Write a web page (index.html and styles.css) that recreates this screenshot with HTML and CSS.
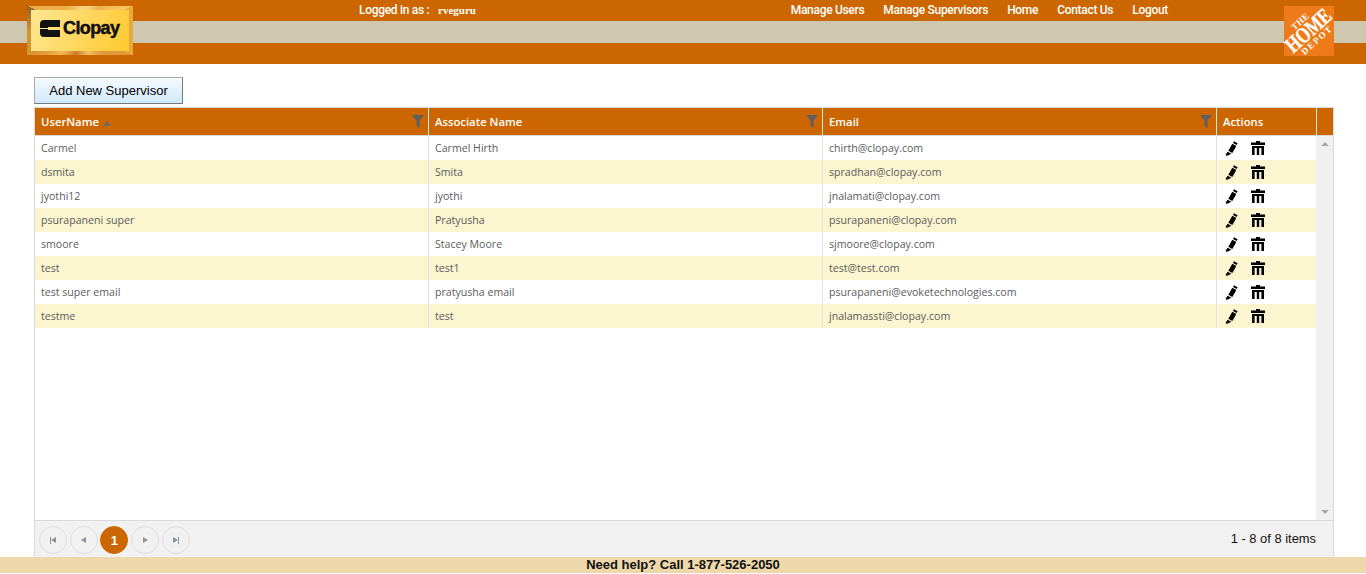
FILE: index.html
```html
<!DOCTYPE html>
<html lang="en">
<head>
  <meta charset="UTF-8" />
  <title>Manage Supervisors</title>
  <link rel="stylesheet" href="styles.css">
</head>
<body>
  <svg class="defs" width="0" height="0">
    <symbol id="i-filter" viewBox="0 0 12 13">
      <path d="M0 0h12L7.5 5.5V13L4.5 10.5V5.5z" />
    </symbol>
    <symbol id="i-pencil" viewBox="0 0 13 15">
      <path d="M9 0.2l3.6 2-1 1.8-3.6-2zM7.3 2.8l4 2.3-4 7-4-2.3zM2.7 10.7l3.7 2.1-3.6 1.7-2.1.3.4-1.7z" />
    </symbol>
    <symbol id="i-trash" viewBox="0 0 14 14">
      <path d="M5 0h4v1.5h5V4H0V1.5h5zM1 5h12v9h-2.6V7H8.2v7H5.8V7H3.6v7H1z" />
    </symbol>
    <symbol id="i-mark" viewBox="0 0 20 17">
      <path d="M4 0h16v7H8v1H0V4a4 4 0 0 1 4-4zM0 9h8v1h12v7H4a4 4 0 0 1-4-4z" />
    </symbol>
  </svg>

  <div class="header">
    <div class="logo-clopay">
      <svg class="clopay-mark"><use href="#i-mark" /></svg>
      <span class="clopay-name">Clopay</span>
    </div>
    <div class="logo-depot">
      <div class="depot-text">
        <span class="depot-small">THE</span>
        <span class="depot-big">HOME</span>
        <span class="depot-small depot-low">DEPOT</span>
      </div>
    </div>
    <div class="header-top">
      <div class="logged-in">Logged in as : <b>rveguru</b></div>
      <div class="nav">
        <a href="#">Manage Users</a>
        <a href="#">Manage Supervisors</a>
        <a href="#">Home</a>
        <a href="#">Contact Us</a>
        <a href="#">Logout</a>
      </div>
    </div>
  </div>

  <div class="main">
    <button class="add-btn">Add New Supervisor</button>

    <div class="grid">
      <div class="grid-head">
        <div class="th">UserName <span class="sort-arrow"></span><svg class="filter"><use href="#i-filter" /></svg></div>
        <div class="th">Associate Name<svg class="filter"><use href="#i-filter" /></svg></div>
        <div class="th">Email<svg class="filter"><use href="#i-filter" /></svg></div>
        <div class="th">Actions</div>
        <div class="th"></div>
      </div>

      <div class="grid-content">
        <div class="rows">
          <div class="row">
            <div class="td">Carmel</div><div class="td">Carmel Hirth</div><div class="td">chirth@clopay.com</div>
            <div class="td actions"><svg class="pencil"><use href="#i-pencil" /></svg><svg class="trash"><use href="#i-trash" /></svg></div>
          </div>
          <div class="row alt">
            <div class="td">dsmita</div><div class="td">Smita</div><div class="td">spradhan@clopay.com</div>
            <div class="td actions"><svg class="pencil"><use href="#i-pencil" /></svg><svg class="trash"><use href="#i-trash" /></svg></div>
          </div>
          <div class="row">
            <div class="td">jyothi12</div><div class="td">jyothi</div><div class="td">jnalamati@clopay.com</div>
            <div class="td actions"><svg class="pencil"><use href="#i-pencil" /></svg><svg class="trash"><use href="#i-trash" /></svg></div>
          </div>
          <div class="row alt">
            <div class="td">psurapaneni super</div><div class="td">Pratyusha</div><div class="td">psurapaneni@clopay.com</div>
            <div class="td actions"><svg class="pencil"><use href="#i-pencil" /></svg><svg class="trash"><use href="#i-trash" /></svg></div>
          </div>
          <div class="row">
            <div class="td">smoore</div><div class="td">Stacey Moore</div><div class="td">sjmoore@clopay.com</div>
            <div class="td actions"><svg class="pencil"><use href="#i-pencil" /></svg><svg class="trash"><use href="#i-trash" /></svg></div>
          </div>
          <div class="row alt">
            <div class="td">test</div><div class="td">test1</div><div class="td">test@test.com</div>
            <div class="td actions"><svg class="pencil"><use href="#i-pencil" /></svg><svg class="trash"><use href="#i-trash" /></svg></div>
          </div>
          <div class="row">
            <div class="td">test super email</div><div class="td">pratyusha email</div><div class="td">psurapaneni@evoketechnologies.com</div>
            <div class="td actions"><svg class="pencil"><use href="#i-pencil" /></svg><svg class="trash"><use href="#i-trash" /></svg></div>
          </div>
          <div class="row alt">
            <div class="td">testme</div><div class="td">test</div><div class="td">jnalamassti@clopay.com</div>
            <div class="td actions"><svg class="pencil"><use href="#i-pencil" /></svg><svg class="trash"><use href="#i-trash" /></svg></div>
          </div>
        </div>
        <div class="scrollbar">
          <span class="scroll-up"></span>
          <span class="scroll-down"></span>
        </div>
      </div>

      <div class="pager">
        <div class="pager-btns">
          <span class="page-btn"><span class="bar"></span><span class="tri-left"></span></span>
          <span class="page-btn"><span class="tri-left"></span></span>
          <span class="page-btn current">1</span>
          <span class="page-btn"><span class="tri-right"></span></span>
          <span class="page-btn"><span class="tri-right"></span><span class="bar"></span></span>
        </div>
        <div class="pager-info">1 - 8 of 8 items</div>
      </div>
    </div>
  </div>

  <div class="footer">Need help? Call 1-877-526-2050</div>
</body>
</html>
```

FILE: styles.css
```css
html, body {
  height: 574px;
}
body {
  margin: 0;
  overflow: hidden;
  font-family: "Liberation Sans", Arial, sans-serif;
  background: #fff;
}
.defs {
  position: absolute;
}

/* header */
.header {
  position: relative;
  height: 64px;
  background: linear-gradient(#cc6600 0 21px, #cfc8b0 21px 43px, #cc6600 43px);
}
.header-top {
  display: flex;
  height: 21px;
  box-sizing: border-box;
  align-items: center;
  padding: 0 0 2px 359px;
  font-family: Roboto, sans-serif;
  font-size: 12px;
  font-weight: 500;
  letter-spacing: -0.3px;
  color: #fff;
}
.logged-in b {
  font-family: "Liberation Serif", serif;
  margin-left: 6px;
  font-size: 11px;
  letter-spacing: 0;
}
.nav {
  display: flex;
  gap: 19px;
  margin-left: auto;
  margin-right: 198px;
}
.nav a {
  color: #fff;
  text-decoration: none;
}
.logo-clopay {
  position: absolute;
  left: 27px;
  top: 6px;
  width: 106px;
  height: 49px;
  box-sizing: border-box;
  display: flex;
  align-items: center;
  gap: 3px;
  padding: 0 0 5px 9px;
  border: 4px solid transparent;
  background:
    linear-gradient(115deg, #ffe793, #ffd65c 55%, #ffc92f) padding-box,
    conic-gradient(#f8d27a 0 20deg, #eeb04a 40deg, #f6c765 65deg, #eaa838 65deg 115deg,
      #e09a38 115deg 135deg, #f4c060 160deg, #cf7c30 190deg, #f2b850 220deg, #dd9238 245deg,
      #d0962f 245deg 270deg, #96642a 295deg, #ebae48 295deg 330deg, #f8d27a) border-box;
}
.clopay-mark {
  width: 20px;
  height: 17px;
  flex: none;
  fill: #111;
}
.clopay-name {
  font-size: 18px;
  font-weight: bold;
  letter-spacing: -0.6px;
  color: #111;
  -webkit-text-stroke: 0.5px #111;
}
.logo-depot {
  position: absolute;
  left: 1284px;
  top: 6px;
  width: 50px;
  height: 50px;
  background: #ee7b1a;
  display: flex;
  align-items: center;
  justify-content: center;
}
.depot-text {
  transform: rotate(-42deg);
  display: flex;
  flex-direction: column;
  align-items: center;
  font-family: "Liberation Serif", serif;
  font-weight: bold;
  color: #fff;
  line-height: 1;
}
.depot-small {
  font-size: 9px;
  letter-spacing: 0.6px;
}
.depot-low {
  letter-spacing: 1.6px;
}
.depot-big {
  font-size: 17px;
  line-height: 16px;
  transform: scaleY(1.3);
  -webkit-text-stroke: 0.3px #fff;
}

/* content */
.main {
  height: 493px;
  box-sizing: border-box;
  padding: 13px 32px 0 34px;
}
.add-btn {
  display: block;
  width: 149px;
  height: 27px;
  padding: 0;
  font-family: "Liberation Sans", Arial, sans-serif;
  font-size: 13px;
  color: #000;
  background: linear-gradient(#f6fbfe, #cfe8fb);
  border: 1px solid;
  border-color: #aaa #777 #777 #aaa;
}
.grid {
  margin-top: 3px;
  height: 450px;
  box-sizing: border-box;
  border: 1px solid #d9d9d9;
  border-bottom: 0;
  display: flex;
  flex-direction: column;
  font-family: "Open Sans", sans-serif;
  font-size: 10.6px;
}
.grid-head {
  display: grid;
  grid-template-columns: 394px 394px 394px 100px 1fr;
  height: 28px;
  background: #cc6600;
  border-bottom: 1px solid #d9d9d9;
  box-sizing: border-box;
  flex: none;
}
.th {
  position: relative;
  display: flex;
  align-items: center;
  gap: 4px;
  padding-left: 6px;
  border-right: 1px solid #e4e4e4;
  color: #fff;
  font-weight: 600;
  font-size: 11.3px;
}
.th:last-child {
  border-right: 0;
}
.sort-arrow {
  width: 0;
  height: 0;
  margin-top: 3px;
  border-left: 4px solid transparent;
  border-right: 4px solid transparent;
  border-bottom: 5px solid #6b6b6b;
}
.filter {
  position: absolute;
  right: 4px;
  top: 7px;
  width: 12px;
  height: 13px;
  fill: #5f5f5f;
}
.grid-content {
  flex: 1;
  display: flex;
  min-height: 0;
}
.rows {
  flex: 1;
}
.row {
  display: grid;
  grid-template-columns: 394px 394px 394px 1fr;
  height: 24px;
  color: #5c5c5c;
}
.row.alt {
  background: #fbf5d0;
}
.td {
  display: flex;
  align-items: center;
  padding-left: 6px;
  border-right: 1px solid #e4e4e4;
}
.td.actions {
  border-right: 0;
  padding-left: 8px;
  gap: 13px;
}
.pencil {
  width: 13px;
  height: 15px;
  fill: #000;
}
.trash {
  width: 14px;
  height: 14px;
  fill: #000;
}
.scrollbar {
  width: 17px;
  flex: none;
  background: #f0f0f0;
  display: flex;
  flex-direction: column;
  justify-content: space-between;
  align-items: center;
  padding: 6px 0;
  box-sizing: border-box;
}
.scroll-up, .scroll-down {
  width: 0;
  height: 0;
  border-left: 4px solid transparent;
  border-right: 4px solid transparent;
}
.scroll-up {
  border-bottom: 4px solid #a8a8a8;
}
.scroll-down {
  border-top: 4px solid #a8a8a8;
}

/* pager */
.pager {
  flex: none;
  height: 37px;
  box-sizing: border-box;
  background: #f1f1f1;
  border-top: 1px solid #d9d9d9;
  display: flex;
  align-items: center;
  justify-content: space-between;
  padding: 2px 17px 0 4px;
}
.pager-btns {
  display: flex;
  gap: 2.7px;
}
.page-btn {
  width: 28px;
  height: 28px;
  box-sizing: border-box;
  border: 1px solid #dedede;
  border-radius: 50%;
  display: flex;
  align-items: center;
  justify-content: center;
}
.page-btn.current {
  background: #cc6600;
  border-color: #cc6600;
  color: #fff;
  font-family: "Liberation Sans", Arial, sans-serif;
  font-size: 13px;
  font-weight: bold;
}
.tri-left, .tri-right {
  width: 0;
  height: 0;
  border-top: 3.5px solid transparent;
  border-bottom: 3.5px solid transparent;
}
.tri-left {
  border-right: 5.5px solid #8a949e;
}
.tri-right {
  border-left: 5.5px solid #8a949e;
}
.bar {
  width: 1.5px;
  height: 7px;
  background: #8a949e;
}
.pager-info {
  padding-bottom: 4px;
  font-family: "Liberation Sans", Arial, sans-serif;
  font-size: 12.9px;
  color: #111;
}

/* footer */
.footer {
  height: 16px;
  line-height: 16px;
  background: #eed8ab;
  text-align: center;
  font-size: 13px;
  font-weight: bold;
  color: #111;
}
```
